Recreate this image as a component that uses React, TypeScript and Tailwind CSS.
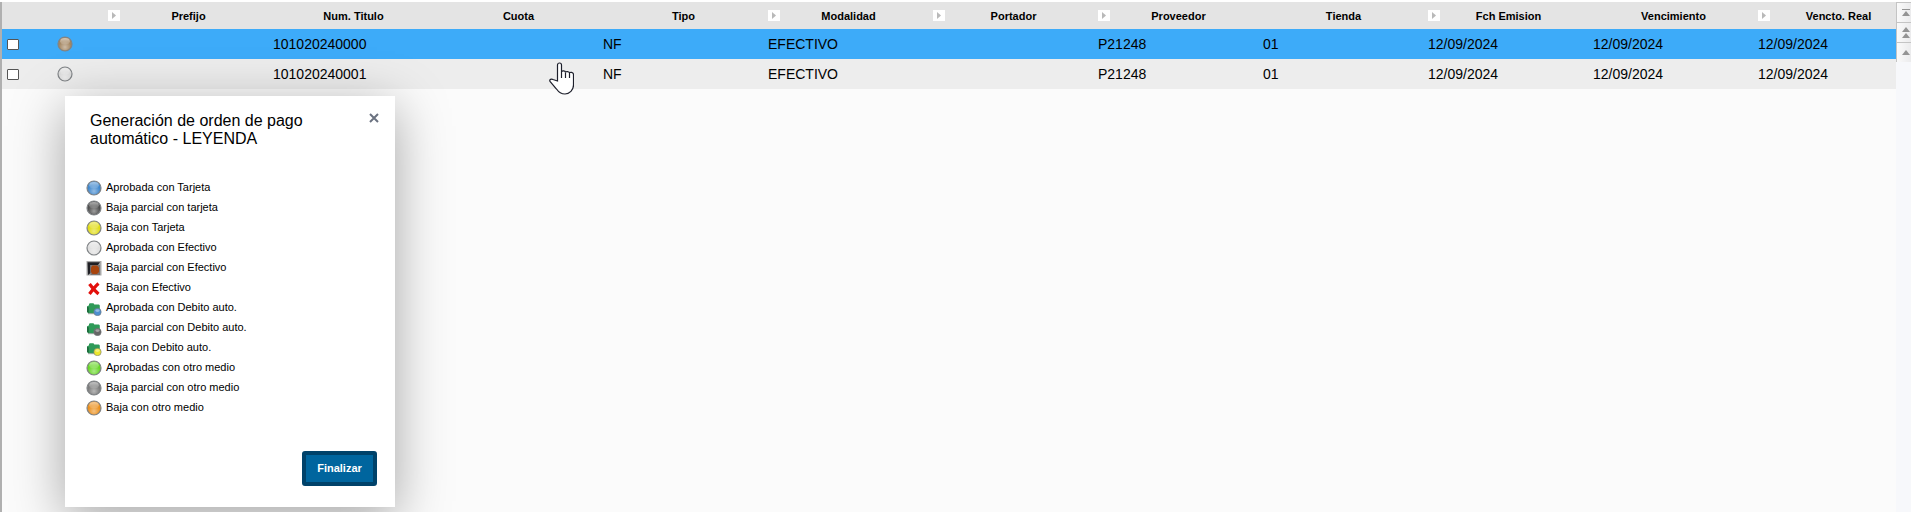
import React, { useId } from 'react';

type Column = { title: string; arrow?: boolean };

const columns: Column[] = [
  { title: 'Prefijo', arrow: true },
  { title: 'Num. Titulo' },
  { title: 'Cuota' },
  { title: 'Tipo' },
  { title: 'Modalidad', arrow: true },
  { title: 'Portador', arrow: true },
  { title: 'Proveedor', arrow: true },
  { title: 'Tienda' },
  { title: 'Fch Emision', arrow: true },
  { title: 'Vencimiento' },
  { title: 'Vencto. Real', arrow: true },
];

const rows = [
  {
    color: '#a38560',
    selected: true,
    cells: ['', '101020240000', '', 'NF', 'EFECTIVO', '', 'P21248', '01', '12/09/2024', '12/09/2024', '12/09/2024'],
  },
  {
    color: '#dcdcdc',
    selected: false,
    cells: ['', '101020240001', '', 'NF', 'EFECTIVO', '', 'P21248', '01', '12/09/2024', '12/09/2024', '12/09/2024'],
  },
];

const Ball: React.FC<{ color: string }> = ({ color }) => {
  const id = useId();
  return (
    <svg viewBox="0 0 16 16" className="block size-4">
      <defs>
        <linearGradient id={`${id}top`} x1="0" y1="0" x2="0" y2="1">
          <stop offset="0" stopColor="#fff" stopOpacity="0.55" />
          <stop offset="1" stopColor="#fff" stopOpacity="0.1" />
        </linearGradient>
        <radialGradient id={`${id}glow`} cx="0.5" cy="0.75" r="0.5">
          <stop offset="0" stopColor="#fff" stopOpacity="0.45" />
          <stop offset="1" stopColor="#fff" stopOpacity="0" />
        </radialGradient>
      </defs>
      <circle cx="8" cy="8" r="7" fill={color} stroke="#808487" strokeWidth="1.2" />
      <circle cx="8" cy="8" r="6.2" fill={`url(#${id}glow)`} />
      <ellipse cx="8" cy="5.2" rx="4.8" ry="3.2" fill={`url(#${id}top)`} />
    </svg>
  );
};

const Portrait: React.FC = () => (
  <svg viewBox="0 0 16 16" className="block size-4">
    <path d="M0.500 1h15v14.500h-15z" fill="#a9a9a9" />
    <path d="M1.500 2.200H14L12 5H4.500v8L2 15z" fill="#1f1f24" />
    <path d="M4.500 5h9.500v10h-9.500z" fill="#7c7573" />
    <path d="M6.500 5.500h4.500l2 2v4.500l-2 2H6.500l-1.500-2V7.500z" fill="#a8440c" />
  </svg>
);

const Cross: React.FC = () => (
  <svg viewBox="0 0 16 16" className="block size-4">
    <path
      d="M3.500 4c2.500 3.500 5.500 7 9 10M12.500 3.500C9 6.500 6.500 10 3.500 14"
      fill="none"
      stroke="#e3100c"
      strokeWidth="3.2"
    />
  </svg>
);

const Folder: React.FC<{ color: string }> = ({ color }) => (
  <svg viewBox="0 0 16 16" className="block size-4">
    <path d="M1 6.500l2-1.200V4l.8-.8h3.700l.8 1.300H13l.8 1V12l-1 1.500-10.500-.5L1 12z" fill="#2f9a58" />
    <path d="M1 6.500l1.800 1V13L1 12z" fill="#1d6b3c" />
    <path d="M2 13h8v1.200H2z" fill="#7a8a7f" opacity="0.7" />
    <circle cx="11.500" cy="12" r="3.700" fill={color} stroke="#77797c" strokeWidth="0.6" />
    <ellipse cx="11.500" cy="10.600" rx="2.200" ry="1.400" fill="#fff" opacity="0.4" />
  </svg>
);

const legend = [
  { label: 'Aprobada con Tarjeta', icon: <Ball color="#3f87cd" /> },
  { label: 'Baja parcial con tarjeta', icon: <Ball color="#4f4f4f" /> },
  { label: 'Baja con Tarjeta', icon: <Ball color="#e0dc14" /> },
  { label: 'Aprobada con Efectivo', icon: <Ball color="#dedede" /> },
  { label: 'Baja parcial con Efectivo', icon: <Portrait /> },
  { label: 'Baja con Efectivo', icon: <Cross /> },
  { label: 'Aprobada con Debito auto.', icon: <Folder color="#4d8fd0" /> },
  { label: 'Baja parcial con Debito auto.', icon: <Folder color="#666666" /> },
  { label: 'Baja con Debito auto.', icon: <Folder color="#ece72c" /> },
  { label: 'Aprobadas con otro medio', icon: <Ball color="#66d626" /> },
  { label: 'Baja parcial con otro medio', icon: <Ball color="#7c7c7c" /> },
  { label: 'Baja con otro medio', icon: <Ball color="#ea8f1c" /> },
];

const TitlesTable: React.FC = () => (
  <table className="w-[1919px] table-fixed border-collapse">
    <colgroup>
      <col className="w-[54px]" />
      <col className="w-[50px]" />
      {columns.map((c) => (
        <col key={c.title} className="w-[165px]" />
      ))}
    </colgroup>
    <thead>
      <tr className="h-[27px] bg-[#e4e4e4]">
        <th />
        <th />
        {columns.map((c) => (
          <th key={c.title} className="p-0 px-0.5 text-[11px] font-bold">
            <div className="flex items-center">
              <span className="w-3">
                {c.arrow && (
                  <svg viewBox="0 0 12 11" className="block h-[11px] w-3">
                    <path d="M0 0h12v11H0z" fill="#fff" />
                    <path d="M4 2l4 3.500-4 3.500z" fill="#b9b9b9" />
                  </svg>
                )}
              </span>
              <span className="flex-1 pt-0.5 text-center">{c.title}</span>
              <span className="w-3" />
            </div>
          </th>
        ))}
      </tr>
    </thead>
    <tbody>
      {rows.map((row) => (
        <tr key={row.cells[1]} className={row.selected ? 'h-[30px] bg-[#3dabf9]' : 'h-[30px] bg-[#ededed]'}>
          <td className="p-0 pl-[5px]">
            <input
              type="checkbox"
              aria-label={`Seleccionar ${row.cells[1]}`}
              className="block h-[11px] w-3 appearance-none rounded-[1px] border border-[#555] bg-white"
            />
          </td>
          <td className="p-0 pl-px">
            <Ball color={row.color} />
          </td>
          {row.cells.map((cell, i) => (
            <td key={columns[i].title} className="p-0 px-0.5 text-sm">
              {cell}
            </td>
          ))}
        </tr>
      ))}
    </tbody>
  </table>
);

const ScrollButtons: React.FC = () => (
  <div className="w-[15px] shrink-0 overflow-hidden bg-[#f7f8fb]">
    {[
      { label: 'Primero', d: 'M5 6h8v1H5zM9 8l4 5H5z' },
      { label: 'Página anterior', d: 'M9 4l4 5H5zM9 10l4 5H5z' },
      { label: 'Anterior', d: 'M9 7l4 5H5z' },
    ].map((b) => (
      <button
        key={b.label}
        aria-label={b.label}
        className="block h-5 w-5 border-t border-l border-[#c4c4c4] bg-linear-to-r from-[#fafafa] to-[#e6e6e8]"
      >
        <svg viewBox="0 0 20 20" className="block size-5">
          <path d={b.d} fill="#949494" />
        </svg>
      </button>
    ))}
  </div>
);

const LegendDialog: React.FC = () => (
  <div
    role="dialog"
    aria-labelledby="legend-title"
    className="absolute top-24 left-[65px] w-[330px] bg-white shadow-[0_12px_50px_rgba(0,0,0,0.35)]"
  >
    <div className="flex items-start justify-between pt-4 pr-3.5 pl-[25px]">
      <h2 id="legend-title" className="w-[230px] text-base leading-[18px]">
        Generación de orden de pago automático - LEYENDA
      </h2>
      <button aria-label="Cerrar" className="px-0.5 py-px">
        <svg viewBox="0 0 10 10" className="block size-2.5">
          <path d="M1 1l8 8M9 1l-8 8" stroke="#6b7280" strokeWidth="2" />
        </svg>
      </button>
    </div>
    <ul className="mt-[29px] pl-[21px] text-[11px]">
      {legend.map((item) => (
        <li key={item.label} className="flex h-5 items-center gap-1">
          <span className="pt-0.5">{item.icon}</span>
          {item.label}
        </li>
      ))}
    </ul>
    <div className="mt-[34px] flex justify-end pr-[18px] pb-[21px]">
      <button className="h-[35px] w-[75px] rounded-[3px] border-4 border-[#00426a] bg-[#00659e] text-[11px] font-bold text-white">
        Finalizar
      </button>
    </div>
  </div>
);

const HandCursor: React.FC = () => (
  <svg viewBox="0 0 25 33" className="pointer-events-none absolute top-[62px] left-[549px] h-[33px] w-[25px]">
    <path
      d="M8.500 19V3a2 2 0 0 1 4 0v7c0-1.500 4-1.500 4 .5 0-1.500 4-1 4 .5 0-1 4-1 4 1.500V23c0 5-4 9-8.500 9-4 0-6.500-2-8.500-5L1 19.500c-1-2 1.500-3 3-2z"
      fill="#fff"
      stroke="#1d1f2b"
      strokeWidth="1.200"
    />
    <path d="M12.500 10v6M16.500 10.500V16M20.500 11v5" stroke="#1d1f2b" strokeWidth="1.200" />
  </svg>
);

export default function App() {
  return (
    <div className="relative min-h-screen overflow-hidden bg-[#fbfbfb] font-['Liberation_Sans',Arial,sans-serif] text-black">
      <div className="flex min-h-screen border-t-2 border-t-white">
        <div className="w-0.5 shrink-0 bg-[#b0b0b0]" />
        <div className="min-w-0 flex-1 overflow-hidden">
          <TitlesTable />
        </div>
        <ScrollButtons />
      </div>
      <LegendDialog />
      <HandCursor />
    </div>
  );
}
